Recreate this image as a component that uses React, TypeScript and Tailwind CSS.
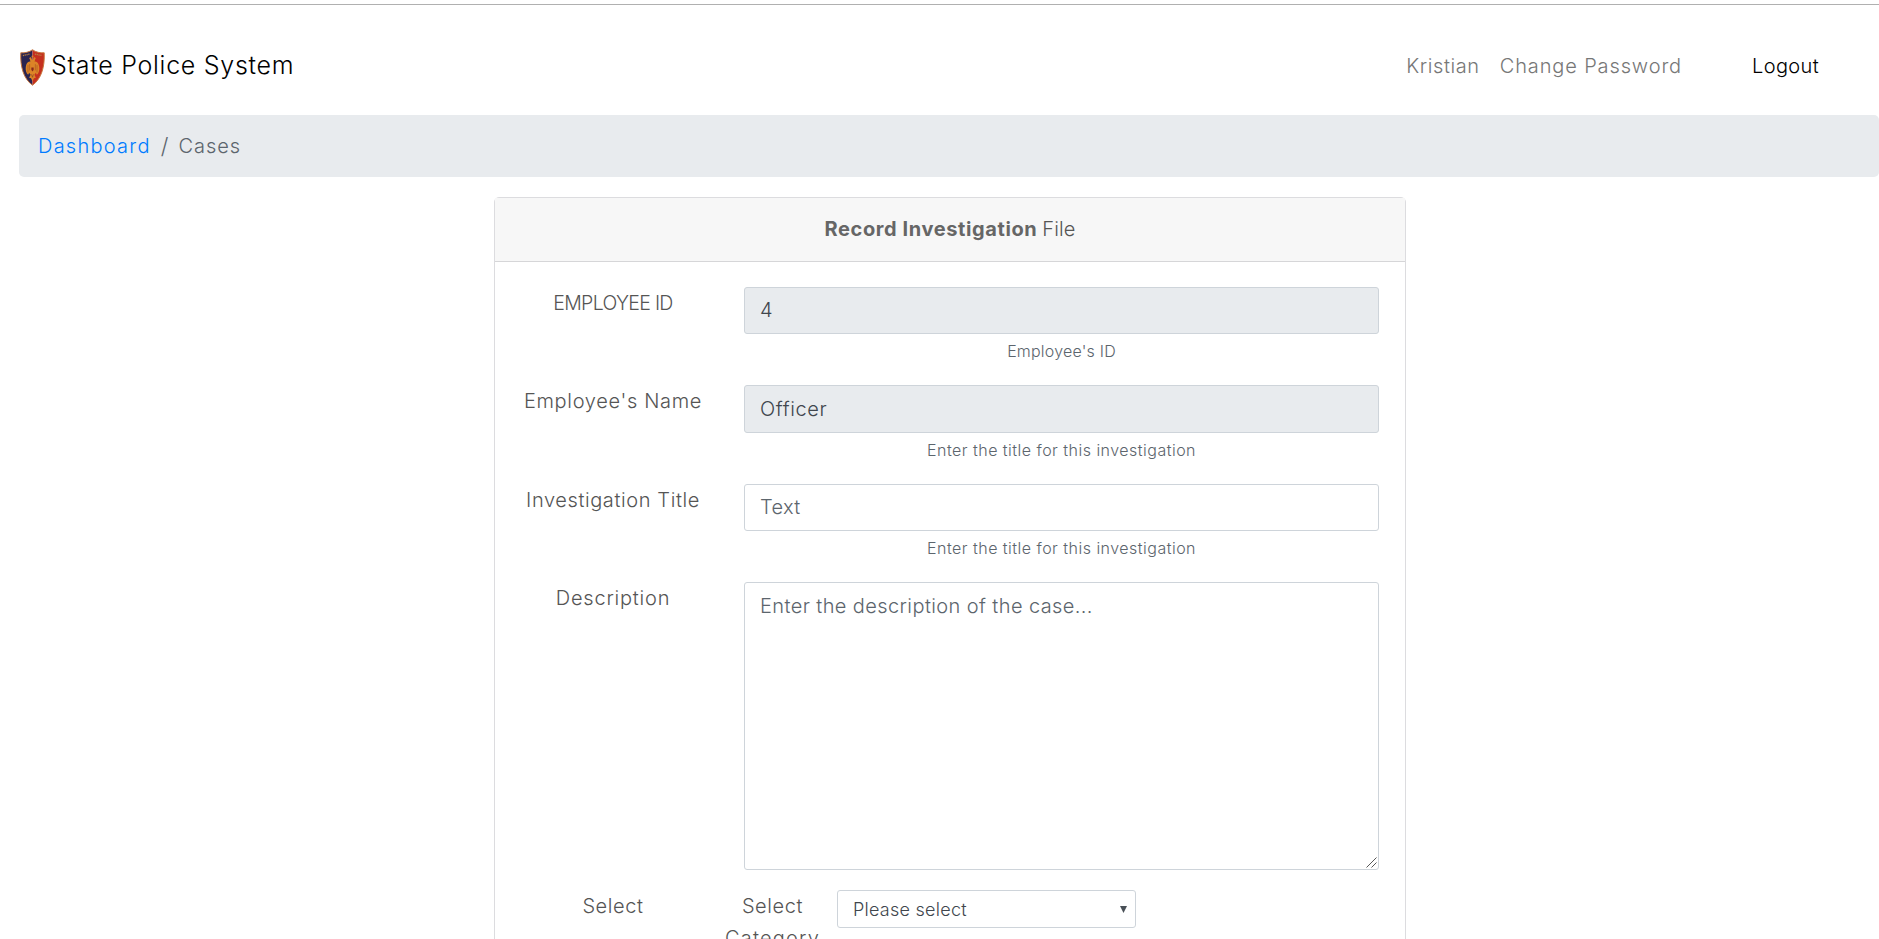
import type { ReactNode } from 'react';

function Shield() {
  return (
    <svg width="25" height="37" viewBox="0 0 26 38" preserveAspectRatio="none" className="shrink-0">
      <path d="M13 .8C9.5 3.300 5 4.200 .8 3.900C.2 18 3.500 30.500 13 37.200Z" fill="#2a2450" />
      <path d="M13 .8C16.500 3.300 21 4.200 25.200 3.900C25.800 18 22.500 30.500 13 37.200Z" fill="#c5301f" />
      <path d="M13 .8C9.500 3.300 5 4.200 .8 3.900C.2 18 3.500 30.500 13 37.200C22.500 30.500 25.800 18 25.200 3.900C21 4.200 16.500 3.300 13 .8Z" fill="none" stroke="#c8763a" strokeWidth="1" />
      <path d="M3 6.800 10.500 5.200M15.500 5.200 23 6.800" stroke="#b9803f" strokeWidth="1.300" strokeDasharray="1.300 .6" />
      <g fill="#dc8427">
        <path d="M12.500 11 11.500 8.200 9.500 9.300 10.300 10.800 10.800 13C8 12.500 6.500 15 6 18.500 5.600 22 6.500 25 8.500 26.500L9.500 24.500 11 26.500 9.500 29.500 11.500 30 13 33 14.500 30 16.500 29.500 15 26.500 16.500 24.500 17.500 26.500C19.500 25 20.400 22 20 18.500 19.500 15 18 12.500 15.200 13L15.700 10.800 16.500 9.300 14.500 8.200 13.500 11Z" />
        <circle cx="13" cy="7.800" r="1" />
      </g>
      <path d="M8.300 16.500V24M17.700 16.500V24M10 15.500V22M16 15.500V22" stroke="#a4511f" strokeWidth=".6" />
      <path d="M11.800 19H14.200V21.500L13 23 11.800 21.500Z" fill="#8a2a1c" />
      <path d="M12 26 13 29 14 26" stroke="#8b4420" strokeWidth=".7" fill="none" />
    </svg>
  );
}

function Row({ label, className, children }: { label: ReactNode; className: string; children: ReactNode }) {
  return (
    <div className={`flex ${className}`}>
      <div className="w-[224px] shrink-0 pt-px text-center leading-[30px]">{label}</div>
      {children}
    </div>
  );
}

function Field({ children, hint }: { children: ReactNode; hint: ReactNode }) {
  return (
    <div className="ml-[19px] flex w-[635px] flex-col">
      {children}
      <small className="mt-[5px] text-center text-[16px] leading-[24px] text-[#5c656d]">{hint}</small>
    </div>
  );
}

export default function App() {
  return (
    <div className="h-[939px] overflow-hidden bg-white pt-1 font-['Inter',sans-serif] text-[20px] font-light text-[#555]">
      <nav className="flex h-[111px] items-start border-t border-[#b0b0b0] pl-[19px] text-[#777]">
        <div className="flex grow pt-[44px] pl-px text-black">
          <Shield />
          <span className="ml-[6px] text-[25px] leading-[32px] tracking-[0.72px]">State Police System</span>
        </div>
        <a className="pt-[46px] leading-[30px] tracking-[0.6px]">Kristian</a>
        <a className="ml-[20px] pt-[46px] leading-[30px] tracking-[0.87px]">Change Password</a>
        <a className="mr-[60px] ml-[70px] pt-[46px] leading-[30px] tracking-[0.36px] text-black">Logout</a>
      </nav>

      <ol className="ml-[19px] flex h-[62px] items-center rounded-[5px] bg-[#e8ebee] pl-[19px] leading-[30px]">
        <li className="tracking-[1.25px] text-[#007bff]">Dashboard</li>
        <li className="ml-[10px] text-[22px] text-[#5c656d]">/</li>
        <li className="ml-[10px] tracking-[1px] text-[#5c656d]">Cases</li>
      </ol>

      <section className="mt-[20px] ml-[494px] h-[900px] w-[912px] rounded-[5px] border border-[#dcdcdf] bg-white">
        <header className="flex h-[64px] justify-center border-b border-[#d6d6d8] bg-[#f7f7f7] pt-[16px] leading-[30px]">
          <strong className="font-bold tracking-[0.6px] text-[#666]">Record Investigation</strong>
          <span className="ml-[5px] tracking-[0.1px]">File</span>
        </header>

        <form className="ml-[6px] pt-[25px]">
          <Row className="h-[98px]" label={<span className="text-[19.5px] tracking-[-0.68px]">EMPLOYEE ID</span>}>
            <Field hint={<span className="tracking-[0.2px]">Employee's ID</span>}>
              <input readOnly defaultValue="4" className="h-[47px] rounded-[3px] border border-[#ced4da] bg-[#e8ebee] px-[15px] pb-[2px] text-[#40464d] outline-none" />
            </Field>
          </Row>
          <Row className="h-[99px]" label={<span className="tracking-[0.66px]">Employee's Name</span>}>
            <Field hint={<span className="tracking-[0.48px]">Enter the title for this investigation</span>}>
              <input readOnly defaultValue="Officer" className="h-[48px] rounded-[3px] border border-[#ced4da] bg-[#e8ebee] px-[15px] tracking-[0.6px] text-[#40464d] outline-none" />
            </Field>
          </Row>
          <Row className="h-[98px]" label={<span className="tracking-[0.6px]">Investigation Title</span>}>
            <Field hint={<span className="tracking-[0.48px]">Enter the title for this investigation</span>}>
              <input placeholder="Text" className="h-[47px] rounded-[3px] border border-[#ced4da] bg-white px-[15px] pb-[2px] tracking-[0.3px] outline-none placeholder:text-[#5c656d]" />
            </Field>
          </Row>
          <Row className="h-[308px]" label={<span className="tracking-[0.78px]">Description</span>}>
            <div className="relative ml-[19px] h-[288px] w-[635px]">
              <textarea placeholder="Enter the description of the case..." className="block h-full w-full resize-none rounded-[3px] border border-[#ced4da] bg-white px-[15px] py-[8px] leading-[30px] tracking-[0.4px] outline-none placeholder:text-[#5c656d]" />
              <svg className="absolute right-[2px] bottom-[2px]" width="11" height="11" viewBox="0 0 11 11" stroke="#444" strokeWidth=".9">
                <path d="M.5 10.500 10.500 .5M5.500 10.500 10.500 5.500" />
              </svg>
            </div>
          </Row>
          <Row className="h-[80px]" label={<span className="tracking-[0.6px]">Select</span>}>
            <div className="flex w-[94px] flex-col items-center pl-px leading-[32px]">
              <span className="tracking-[0.6px]">Select</span>
              <span className="tracking-[1.2px]">Category</span>
            </div>
            <div className="relative ml-[18px] h-[38px] w-[299px]">
              <select className="h-full w-full appearance-none rounded-[3px] border border-[#ced4da] bg-white px-[15px] pt-[1px] text-[18px] tracking-[0.25px] text-[#40464d] outline-none">
                <option>Please select</option>
              </select>
              <svg className="absolute top-[16px] right-[9px]" width="7" height="7" viewBox="0 0 7 7" fill="#495057">
                <path d="M0 0H7L3.500 7Z" />
              </svg>
            </div>
          </Row>
        </form>
      </section>
    </div>
  );
}
